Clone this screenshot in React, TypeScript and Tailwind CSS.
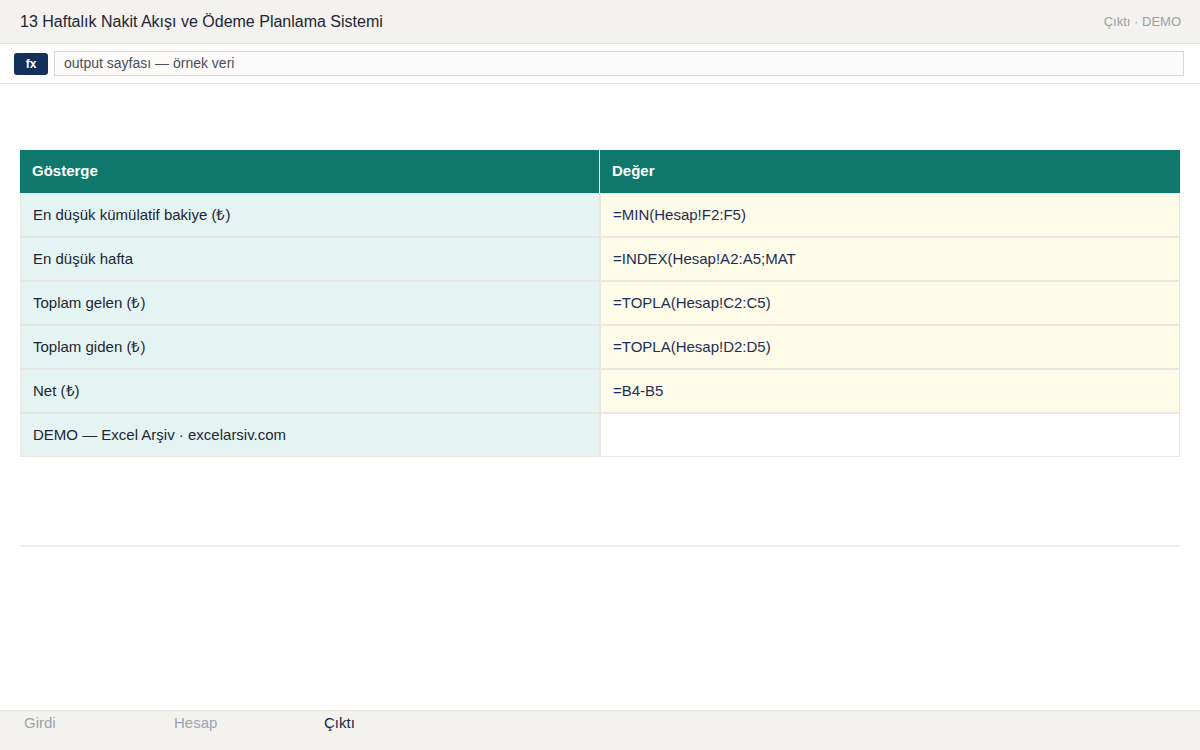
const rows: { label: string; value: string; cream: boolean }[] = [
  { label: 'En düşük kümülatif bakiye (₺)', value: '=MIN(Hesap!F2:F5)', cream: true },
  { label: 'En düşük hafta', value: '=INDEX(Hesap!A2:A5;MAT', cream: true },
  { label: 'Toplam gelen (₺)', value: '=TOPLA(Hesap!C2:C5)', cream: true },
  { label: 'Toplam giden (₺)', value: '=TOPLA(Hesap!D2:D5)', cream: true },
  { label: 'Net (₺)', value: '=B4-B5', cream: true },
  { label: 'DEMO — Excel Arşiv · excelarsiv.com', value: '', cream: false },
];

const tabs = ['Girdi', 'Hesap', 'Çıktı'];

export default function App() {
  return (
    <div className="flex h-[750px] w-[1200px] flex-col bg-white font-['Liberation_Sans',Arial,sans-serif]">
      {/* header */}
      <div className="flex h-[44px] shrink-0 items-center justify-between border-b border-[#e6e4de] bg-[#f3f2ee] pl-5 pr-[19px]">
        <div className="text-[16px] text-[#1f2533]">13 Haftalık Nakit Akışı ve Ödeme Planlama Sistemi</div>
        <div className="text-[13px] text-[#9aa0aa]">Çıktı · DEMO</div>
      </div>

      {/* formula bar */}
      <div className="flex h-[40px] shrink-0 items-center gap-[6px] border-b border-[#e6e4de] bg-white pl-[14px] pr-[16px]">
        <div className="flex h-[22px] w-[34px] items-center justify-center rounded-[3px] bg-[#13305a] text-[12px] font-bold text-white">
          fx
        </div>
        <div className="flex h-[25px] flex-1 items-center border border-[#dcd8d1] bg-[#fcfbf9] px-[9px] text-[14px] text-[#4a4f5a]">
          output sayfası — örnek veri
        </div>
      </div>

      {/* sheet */}
      <div className="flex-1 px-5 pt-[66px]">
        <div className="grid grid-cols-2">
          <div className="flex h-[43px] items-center border-r border-white bg-[#10776d] px-3 text-[15px] font-bold text-white">
            Gösterge
          </div>
          <div className="flex h-[43px] items-center bg-[#10776d] px-3 text-[15px] font-bold text-white">
            Değer
          </div>
          {rows.map((r) => (
            <div key={r.label} className="contents">
              <div className="flex h-[44px] items-center border border-[#e8e6e0] bg-[#e3f4f3] px-3 text-[15px] text-[#1f2533]">
                {r.label}
              </div>
              <div
                className={
                  r.cream
                    ? 'flex h-[44px] items-center border border-[#e8e6e0] bg-[#fefbe8] px-3 text-[15px] text-[#1b2f55]'
                    : 'flex h-[44px] items-center border border-[#e8e6e0] bg-white px-3 text-[15px] text-[#1b2f55]'
                }
              >
                {r.value}
              </div>
            </div>
          ))}
        </div>
        <div className="mt-[88px] h-[2px] bg-[#efeee9]" />
      </div>

      {/* sheet tabs */}
      <div className="flex h-[40px] shrink-0 items-start border-t border-[#e6e4de] bg-[#f3f2ee] pl-6 pt-[2px]">
        {tabs.map((t) => (
          <div
            key={t}
            className={
              t === 'Çıktı'
                ? 'w-[150px] text-[15px] leading-5 text-[#13264a]'
                : 'w-[150px] text-[15px] leading-5 text-[#9ca3af]'
            }
          >
            {t}
          </div>
        ))}
      </div>
    </div>
  );
}
